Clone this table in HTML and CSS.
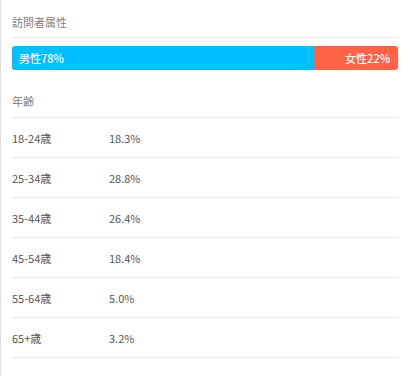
FILE: index.html
```html
<!DOCTYPE html>
<html lang="ja">
<head>
<meta charset="utf-8">
<link rel="stylesheet" href="styles.css">
</head>
<body>
<div class="card">
  <div class="title first">訪問者属性</div>
  <div class="bar">
    <div class="seg male" style="width:78%">男性78%</div>
    <div class="seg female" style="width:22%">女性22%</div>
  </div>
  <div class="title second">年齢</div>
  <div class="row"><span class="label">18-24歳</span><span class="value">18.3%</span></div>
  <div class="row"><span class="label">25-34歳</span><span class="value">28.8%</span></div>
  <div class="row"><span class="label">35-44歳</span><span class="value">26.4%</span></div>
  <div class="row"><span class="label">45-54歳</span><span class="value">18.4%</span></div>
  <div class="row"><span class="label">55-64歳</span><span class="value">5.0%</span></div>
  <div class="row"><span class="label">65+歳</span><span class="value">3.2%</span></div>
</div>
</body>
</html>
```
FILE: styles.css
```css
html, body {
  margin: 0;
  padding: 0;
  background: #fff;
}
body {
  font-family: "Noto Sans CJK JP", "Noto Sans", sans-serif;
  font-size: 11px;
  color: #555;
}
.card {
  width: 386px;
  padding: 0 14px 18px 11px;
  border-left: 1px solid #dedede;
  border-bottom: 1px solid #e6e6e6;
  min-height: 357px;
}
.title {
  color: #808080;
  line-height: 20px;
  border-bottom: 1px solid #e8e8e8;
  padding-bottom: 5px;
}
.title.first {
  padding-top: 12px;
}
.title.second {
  margin-top: 21px;
  padding-bottom: 6px;
}
.bar {
  display: flex;
  height: 24px;
  margin-top: 8px;
  border-radius: 3px;
  overflow: hidden;
}
.seg {
  display: flex;
  align-items: center;
  color: #fff;
  font-weight: 500;
  padding: 0 7px;
  box-sizing: border-box;
}
.male {
  background: #00bfff;
}
.female {
  background: #ff6348;
  justify-content: flex-end;
  padding-right: 8px;
}
.row {
  display: flex;
  align-items: center;
  height: 39px;
  border-bottom: 1px solid #e8e8e8;
}
.label {
  width: 97px;
}
```
